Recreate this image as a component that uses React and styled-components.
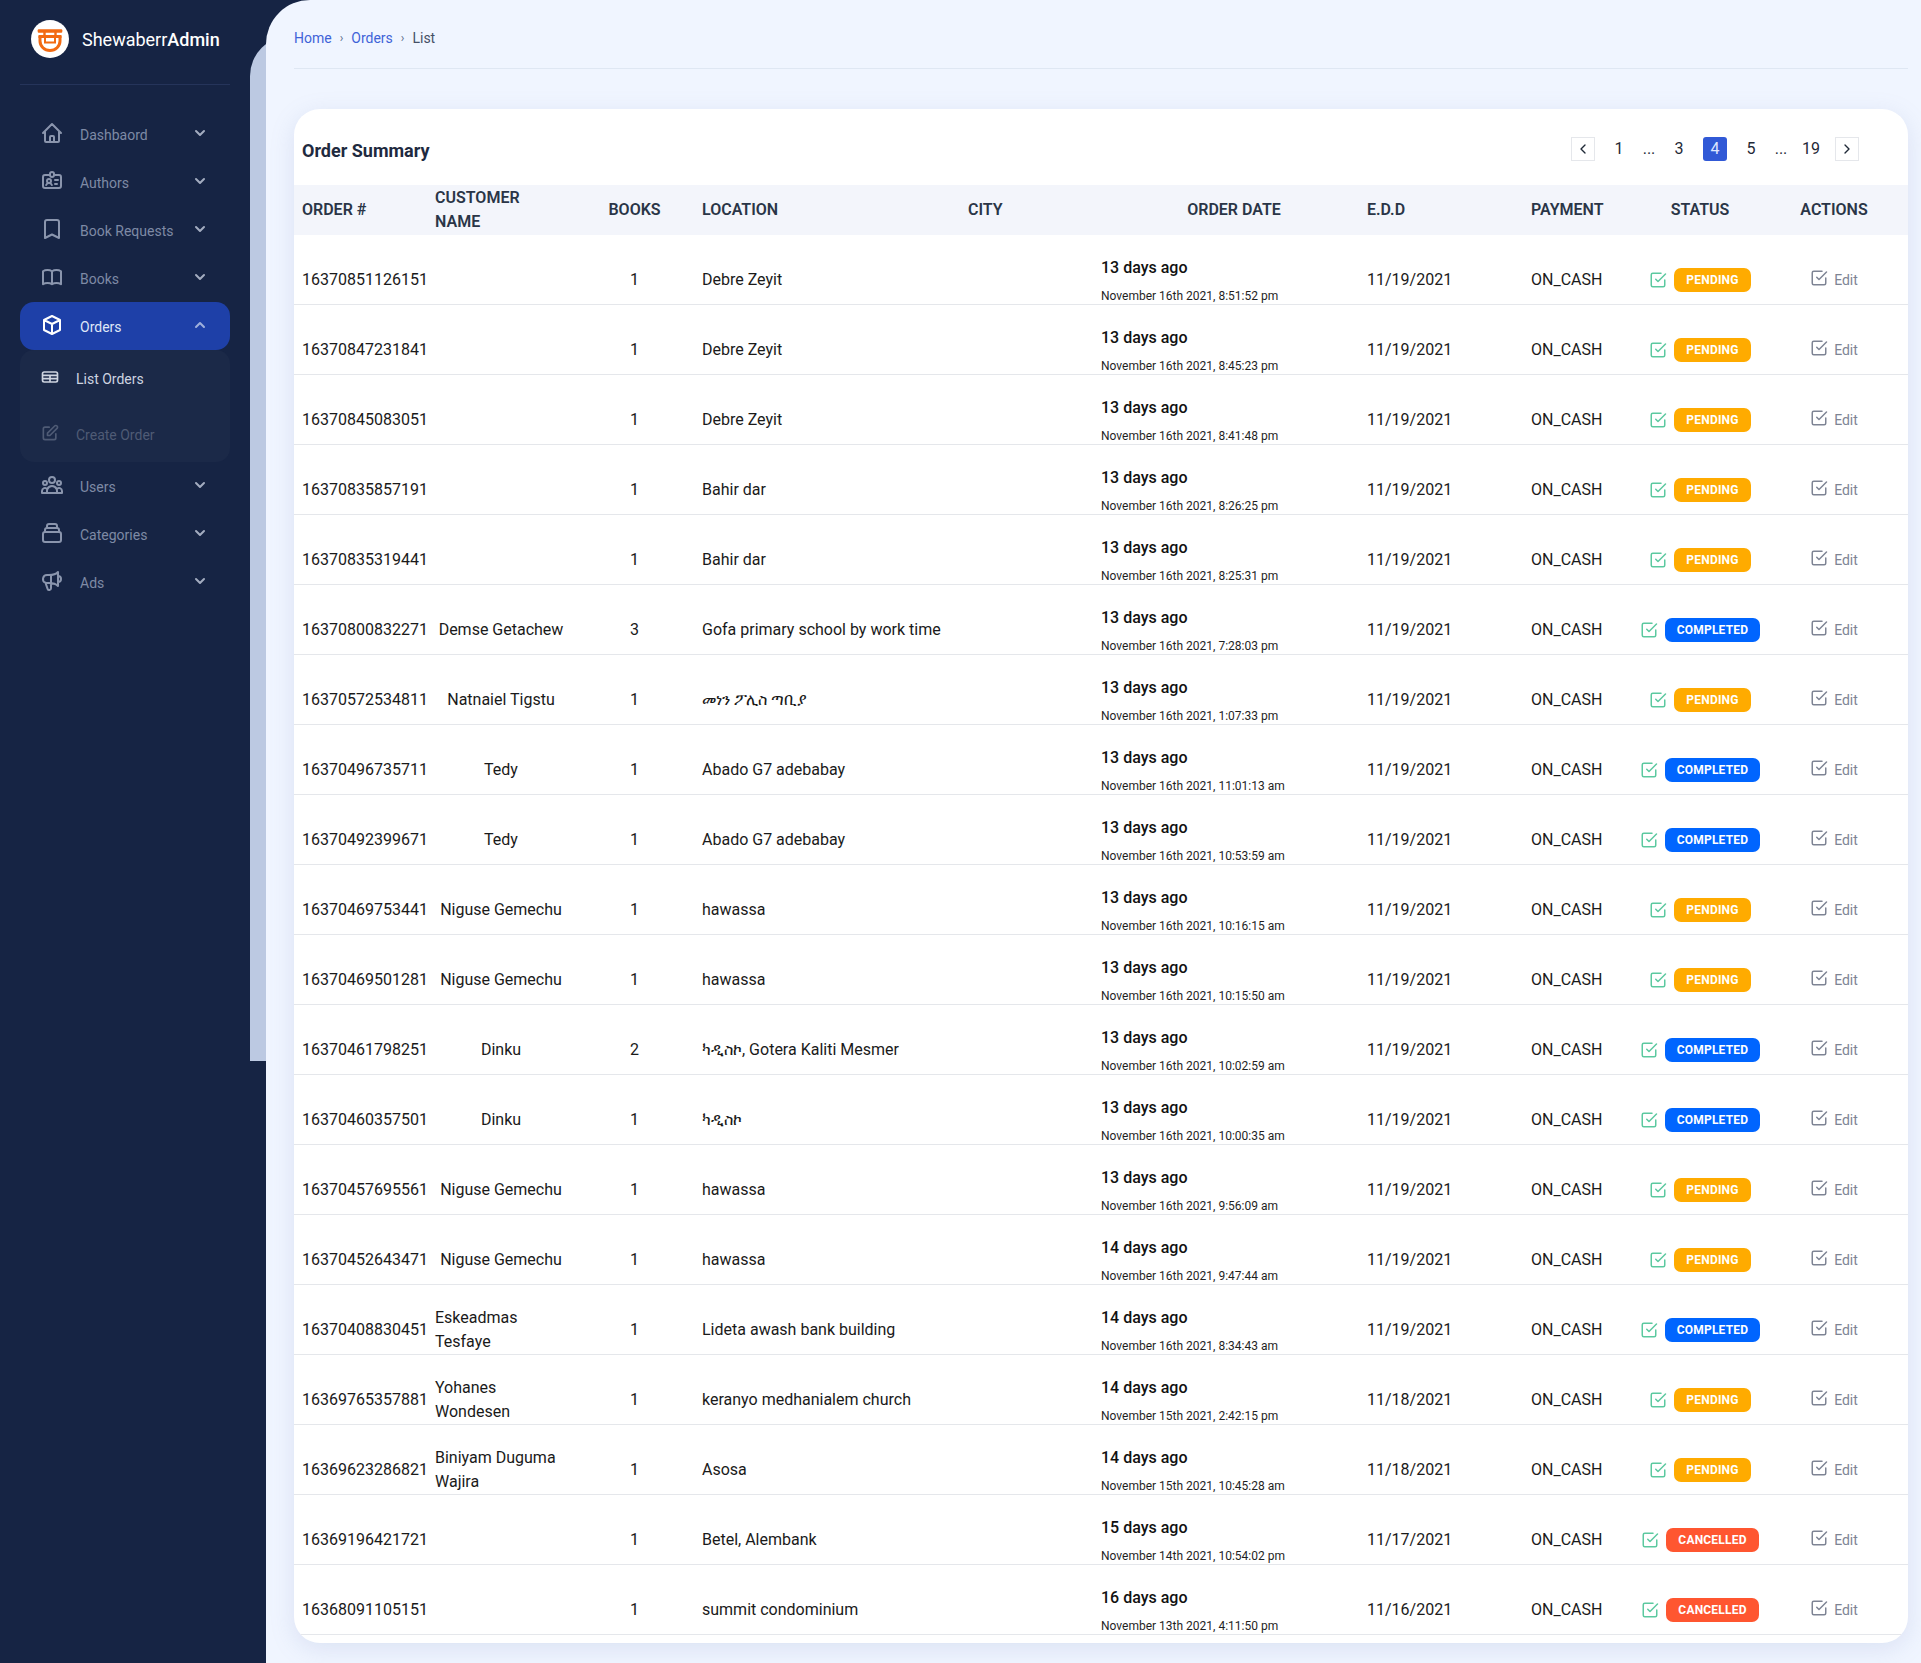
import styled, { createGlobalStyle } from "styled-components";
import {
  HiOutlineHome,
  HiOutlineIdentification,
  HiOutlineBookmark,
  HiOutlineBookOpen,
  HiOutlineCube,
  HiOutlineUserGroup,
  HiOutlineCollection,
  HiOutlineSpeakerphone,
  HiOutlineTable,
  HiOutlinePencilAlt,
  HiChevronDown,
  HiChevronUp,
} from "react-icons/hi";
import { FiCheckSquare, FiChevronLeft, FiChevronRight } from "react-icons/fi";

const GlobalStyle = createGlobalStyle`
  html, body {
    margin: 0;
    padding: 0;
    background: #162444;
    font-family: Roboto, "DejaVu Sans", sans-serif;
  }
  * { box-sizing: border-box; }
`;

const Page = styled.div`
  display: flex;
  width: 1921px;
  height: 1663px;
  overflow: hidden;
  background: #162444;
`;

const Sidebar = styled.aside`
  width: 266px;
  flex: none;
  padding: 0 36px 0 20px;
`;

const Brand = styled.div`
  display: flex;
  align-items: center;
  gap: 13px;
  height: 85px;
  padding: 0 10px 6px 11px;
  border-bottom: 1px solid #25345a;
  color: #fff;
  font-size: 18px;
  b { font-weight: 500; }
`;

const Nav = styled.nav`
  margin-top: 25px;
`;

const NavItem = styled.div`
  display: flex;
  align-items: center;
  height: 48px;
  padding: 0 20px 0 20px;
  border-radius: 14px;
  font-size: 14px;
  color: ${(p) => (p.$active ? "#dfe6f7" : "#7e8aa5")};
  background: ${(p) => (p.$active ? "#1e40a8" : "transparent")};
  > svg {
    width: 24px;
    height: 24px;
    flex: none;
    margin-right: 16px;
    margin-top: -3px;
    color: ${(p) => (p.$active ? "#fff" : "#8a95ad")};
  }
  span { flex: 1; padding-top: 2px; }
`;

const Chevron = styled.div`
  display: flex;
  margin-top: -3px;
  color: ${(p) => (p.$active ? "#9fb0dc" : "#a3acc0")};
  svg { width: 20px; height: 20px; }
`;

const SubMenu = styled.div`
  height: 112px;
  border-radius: 14px;
  background: #1b2948;
  padding-top: 1px;
`;

const SubItem = styled.div`
  display: flex;
  align-items: center;
  height: 56px;
  padding-left: 20px;
  font-size: 14px;
  color: ${(p) => (p.$muted ? "#4f5b75" : "#ced4e0")};
  svg {
    width: 20px;
    height: 20px;
    margin-right: 16px;
    margin-top: -4px;
    color: ${(p) => (p.$muted ? "#4f5b75" : "#ced4e0")};
  }
`;

const Main = styled.main`
  position: relative;
  flex: 1;
  min-width: 0;
  padding: 0 13px 0 28px;
  background: #f0f5ff;
  border-top-left-radius: 44px;
  &::before {
    content: "";
    position: absolute;
    left: -16px;
    top: 36px;
    width: 60px;
    height: 1025px;
    background: #bcc9e2;
    border-top-left-radius: 40px;
    z-index: -1;
  }
`;

const Layer = styled.div`
  position: relative;
  z-index: 0;
  flex: 1;
  min-width: 0;
  display: flex;
`;

const Breadcrumb = styled.div`
  display: flex;
  align-items: center;
  height: 69px;
  padding-top: 8px;
  border-bottom: 1px solid #dfe7f3;
  font-size: 14px;
  color: #465066;
  a { color: #3f63d8; }
  i {
    font-style: normal;
    margin: 0 8px;
    font-size: 12px;
    color: #5a6a8a;
  }
`;

const Card = styled.section`
  margin-top: 40px;
  height: 1534px;
  background: #fff;
  border-radius: 26px;
  box-shadow: 0 6px 24px rgba(120, 140, 190, 0.18);
  overflow: hidden;
`;

const CardHead = styled.div`
  display: flex;
  align-items: center;
  justify-content: space-between;
  height: 76px;
  padding: 0 49px 0 8px;
`;

const Title = styled.h2`
  margin: 6px 0 0;
  font-size: 18px;
  font-weight: 700;
  color: #1f2a40;
`;

const Pager = styled.div`
  display: flex;
  align-items: center;
  gap: 12px;
  margin-top: 3px;
`;

const PageBtn = styled.div`
  display: flex;
  align-items: center;
  justify-content: center;
  width: ${(p) => (p.$dots ? "12px" : "24px")};
  height: 24px;
  font-size: 16px;
  color: ${(p) => (p.$current ? "#dfe7ff" : "#1f2937")};
  background: ${(p) => (p.$current ? "#3159d6" : "transparent")};
  border: ${(p) => (p.$box ? "1px solid #e5e7eb" : "none")};
  border-radius: ${(p) => (p.$current ? "3px" : "0")};
  svg { width: 16px; height: 16px; }
`;

const Table = styled.table`
  width: 1614px;
  border-collapse: separate;
  border-spacing: 0;
  table-layout: fixed;
  font-size: 16px;
  color: #1a1a1a;
`;

const Th = styled.th`
  height: 50px;
  padding: ${(p) => (p.$pad ? `0 8px 0 ${p.$pad}px` : "0 8px")};
  font-weight: 600;
  line-height: 24px;
  color: #2a3547;
  background: #f3f5fb;
  text-transform: uppercase;
  text-align: ${(p) => p.$align || "left"};
`;

const Row = styled.tr`
  height: 70px;
`;

const Td = styled.td`
  padding: 20px ${(p) => (p.$flush ? "0" : "8px")} 0;
  border-bottom: 1px solid #e5e7eb;
  line-height: 24px;
  text-align: ${(p) => p.$align || "left"};
  white-space: ${(p) => (p.$nowrap ? "nowrap" : "normal")};
`;

const DateCell = styled.td`
  padding: 21px 8px 0;
  border-bottom: 1px solid #e5e7eb;
  vertical-align: top;
  strong {
    display: block;
    font-size: 16px;
    font-weight: 500;
    line-height: 24px;
    color: #111;
  }
  small {
    display: block;
    margin-top: 8px;
    font-size: 12px;
    line-height: 16px;
    color: #1f1f1f;
  }
`;

const StatusWrap = styled.div`
  display: flex;
  align-items: center;
  justify-content: center;
  gap: 7px;
  svg { flex: none; width: 18px; height: 18px; color: #5cc9a0; margin-top: 1px; }
`;

const Badge = styled.span`
  flex: none;
  display: inline-flex;
  align-items: center;
  height: 24px;
  padding: 0 12px;
  border-radius: 7px;
  font-size: 12px;
  font-weight: 700;
  letter-spacing: 0.2px;
  color: #fff;
  background: ${(p) => p.$bg};
`;

const EditLink = styled.div`
  display: flex;
  align-items: center;
  justify-content: center;
  gap: 6px;
  font-size: 14px;
  color: #7e8494;
  svg { width: 18px; height: 18px; margin-top: -3px; color: #7e8494; }
`;

const Mark = styled.svg`
  width: 38px;
  height: 38px;
  flex: none;
`;

const COLS = [133, 148, 119, 266, 133, 266, 164, 117, 120, 148];

const BADGES = {
  PENDING: "#ffab00",
  COMPLETED: "#0065ff",
  CANCELLED: "#ff5630",
};

const rows = [
  ["16370851126151", "", 1, "Debre Zeyit", "13 days ago", "November 16th 2021, 8:51:52 pm", "11/19/2021", "PENDING"],
  ["16370847231841", "", 1, "Debre Zeyit", "13 days ago", "November 16th 2021, 8:45:23 pm", "11/19/2021", "PENDING"],
  ["16370845083051", "", 1, "Debre Zeyit", "13 days ago", "November 16th 2021, 8:41:48 pm", "11/19/2021", "PENDING"],
  ["16370835857191", "", 1, "Bahir dar", "13 days ago", "November 16th 2021, 8:26:25 pm", "11/19/2021", "PENDING"],
  ["16370835319441", "", 1, "Bahir dar", "13 days ago", "November 16th 2021, 8:25:31 pm", "11/19/2021", "PENDING"],
  ["16370800832271", "Demse Getachew", 3, "Gofa primary school by work time", "13 days ago", "November 16th 2021, 7:28:03 pm", "11/19/2021", "COMPLETED"],
  ["16370572534811", "Natnaiel Tigstu", 1, "መነን ፖሊስ ጣቢያ", "13 days ago", "November 16th 2021, 1:07:33 pm", "11/19/2021", "PENDING"],
  ["16370496735711", "Tedy", 1, "Abado G7 adebabay", "13 days ago", "November 16th 2021, 11:01:13 am", "11/19/2021", "COMPLETED"],
  ["16370492399671", "Tedy", 1, "Abado G7 adebabay", "13 days ago", "November 16th 2021, 10:53:59 am", "11/19/2021", "COMPLETED"],
  ["16370469753441", "Niguse Gemechu", 1, "hawassa", "13 days ago", "November 16th 2021, 10:16:15 am", "11/19/2021", "PENDING"],
  ["16370469501281", "Niguse Gemechu", 1, "hawassa", "13 days ago", "November 16th 2021, 10:15:50 am", "11/19/2021", "PENDING"],
  ["16370461798251", "Dinku", 2, "ካዲስኮ, Gotera Kaliti Mesmer", "13 days ago", "November 16th 2021, 10:02:59 am", "11/19/2021", "COMPLETED"],
  ["16370460357501", "Dinku", 1, "ካዲስኮ", "13 days ago", "November 16th 2021, 10:00:35 am", "11/19/2021", "COMPLETED"],
  ["16370457695561", "Niguse Gemechu", 1, "hawassa", "13 days ago", "November 16th 2021, 9:56:09 am", "11/19/2021", "PENDING"],
  ["16370452643471", "Niguse Gemechu", 1, "hawassa", "14 days ago", "November 16th 2021, 9:47:44 am", "11/19/2021", "PENDING"],
  ["16370408830451", "Eskeadmas Tesfaye", 1, "Lideta awash bank building", "14 days ago", "November 16th 2021, 8:34:43 am", "11/19/2021", "COMPLETED"],
  ["16369765357881", "Yohanes Wondesen", 1, "keranyo medhanialem church", "14 days ago", "November 15th 2021, 2:42:15 pm", "11/18/2021", "PENDING"],
  ["16369623286821", "Biniyam Duguma Wajira", 1, "Asosa", "14 days ago", "November 15th 2021, 10:45:28 am", "11/18/2021", "PENDING"],
  ["16369196421721", "", 1, "Betel, Alembank", "15 days ago", "November 14th 2021, 10:54:02 pm", "11/17/2021", "CANCELLED"],
  ["16368091105151", "", 1, "summit condominium", "16 days ago", "November 13th 2021, 4:11:50 pm", "11/16/2021", "CANCELLED"],
];

const App = () => {
  return (
    <Page>
      <GlobalStyle />
      <Sidebar>
        <Brand>
          <Mark viewBox="0 0 38 38">
            <circle cx="19" cy="19" r="19" fill="#fff" />
            <rect x="6.7" y="9.3" width="24.6" height="3.4" rx="1" fill="#f26a12" />
            <path d="M13.5 12v6M24.5 12v6" stroke="#f26a12" strokeWidth="2.4" />
            <rect x="7.5" y="15" width="23" height="3" fill="#f26a12" />
            <path d="M9 16v5a10 9.5 0 0 0 20 0v-5" fill="none" stroke="#f26a12" strokeWidth="3" />
            <path d="M14 18v4.5h10V18" fill="none" stroke="#f26a12" strokeWidth="2" />
          </Mark>
          <div>
            Shewaberr<b>Admin</b>
          </div>
        </Brand>
        <Nav>
          <NavItem><HiOutlineHome /><span>Dashbaord</span><Chevron><HiChevronDown /></Chevron></NavItem>
          <NavItem><HiOutlineIdentification /><span>Authors</span><Chevron><HiChevronDown /></Chevron></NavItem>
          <NavItem><HiOutlineBookmark /><span>Book Requests</span><Chevron><HiChevronDown /></Chevron></NavItem>
          <NavItem><HiOutlineBookOpen /><span>Books</span><Chevron><HiChevronDown /></Chevron></NavItem>
          <NavItem $active><HiOutlineCube /><span>Orders</span><Chevron $active><HiChevronUp /></Chevron></NavItem>
          <SubMenu>
            <SubItem><HiOutlineTable /><span>List Orders</span></SubItem>
            <SubItem $muted><HiOutlinePencilAlt /><span>Create Order</span></SubItem>
          </SubMenu>
          <NavItem><HiOutlineUserGroup /><span>Users</span><Chevron><HiChevronDown /></Chevron></NavItem>
          <NavItem><HiOutlineCollection /><span>Categories</span><Chevron><HiChevronDown /></Chevron></NavItem>
          <NavItem><HiOutlineSpeakerphone /><span>Ads</span><Chevron><HiChevronDown /></Chevron></NavItem>
        </Nav>
      </Sidebar>
      <Layer>
        <Main>
          <Breadcrumb>
            <a>Home</a><i>›</i><a>Orders</a><i>›</i><span>List</span>
          </Breadcrumb>
          <Card>
            <CardHead>
              <Title>Order Summary</Title>
              <Pager>
                <PageBtn $box><FiChevronLeft /></PageBtn>
                <PageBtn>1</PageBtn>
                <PageBtn $dots>...</PageBtn>
                <PageBtn>3</PageBtn>
                <PageBtn $current>4</PageBtn>
                <PageBtn>5</PageBtn>
                <PageBtn $dots>...</PageBtn>
                <PageBtn>19</PageBtn>
                <PageBtn $box><FiChevronRight /></PageBtn>
              </Pager>
            </CardHead>
            <Table>
              <colgroup>
                {COLS.map((w, i) => (
                  <col key={i} width={w} />
                ))}
              </colgroup>
              <thead>
                <tr>
                  <Th>Order #</Th>
                  <Th>Customer Name</Th>
                  <Th $align="center">Books</Th>
                  <Th>Location</Th>
                  <Th>City</Th>
                  <Th $align="center" $pad={24}>Order Date</Th>
                  <Th>E.D.D</Th>
                  <Th>Payment</Th>
                  <Th $align="center">Status</Th>
                  <Th $align="center">Actions</Th>
                </tr>
              </thead>
              <tbody>
                {rows.map((r) => (
                  <Row key={r[0]}>
                    <Td $nowrap>{r[0]}</Td>
                    <Td $align={r[1].length > 15 ? "left" : "center"}>{r[1]}</Td>
                    <Td $align="center">{r[2]}</Td>
                    <Td $nowrap>{r[3]}</Td>
                    <Td />
                    <DateCell>
                      <strong>{r[4]}</strong>
                      <small>{r[5]}</small>
                    </DateCell>
                    <Td>{r[6]}</Td>
                    <Td>ON_CASH</Td>
                    <Td $flush>
                      <StatusWrap>
                        <FiCheckSquare />
                        <Badge $bg={BADGES[r[7]]}>{r[7]}</Badge>
                      </StatusWrap>
                    </Td>
                    <Td>
                      <EditLink>
                        <FiCheckSquare />
                        Edit
                      </EditLink>
                    </Td>
                  </Row>
                ))}
              </tbody>
            </Table>
          </Card>
        </Main>
      </Layer>
    </Page>
  );
};

export default App;
